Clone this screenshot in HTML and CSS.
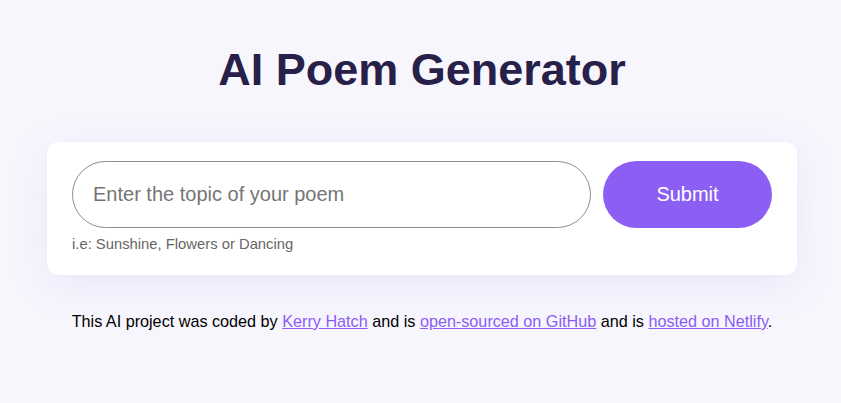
FILE: index.html
```html
<!DOCTYPE html>
<html lang="en">
<head>
<meta charset="utf-8">
<title>AI Poem Generator</title>
<link rel="stylesheet" href="styles.css">
</head>
<body>
<div class="container">
  <h1 class="title">AI Poem Generator</h1>
  <form class="card">
    <div class="row">
      <input class="topic" type="text" placeholder="Enter the topic of your poem">
      <button class="submit" type="button">Submit</button>
    </div>
    <div class="hint">i.e: Sunshine, Flowers or Dancing</div>
  </form>
  <footer class="footer">
    This AI project was coded by <a href="#">Kerry Hatch</a> and is <a href="#">open-sourced on GitHub</a> and is <a href="#">hosted on Netlify</a>.
  </footer>
</div>
</body>
</html>
```

FILE: styles.css
```css
html, body {
  margin: 0;
  padding: 0;
}
body {
  background: #f7f6fd;
  font-family: "Liberation Sans", Arial, sans-serif;
  min-height: 403px;
}
.container {
  width: 750px;
  margin: 0 auto;
  padding: 44px 0 0 3px;
}
.title {
  margin: 0;
  text-align: center;
  font-size: 45px;
  font-weight: 700;
  color: #27214a;
  line-height: 52px;
}
.card {
  margin-top: 46px;
  background: #fff;
  border-radius: 12px;
  padding: 19px 25px 21px;
  box-shadow: 0 10px 40px rgba(120, 100, 220, 0.1);
}
.row {
  display: flex;
  gap: 12px;
}
.topic {
  flex: 1;
  height: 67px;
  box-sizing: border-box;
  border: 1px solid #8e8c98;
  border-radius: 34px;
  padding: 0 20px;
  font-family: inherit;
  font-size: 20px;
  color: #333;
  outline: none;
}
.topic::placeholder {
  color: #757575;
}
.submit {
  width: 169px;
  height: 67px;
  border: none;
  border-radius: 34px;
  background: #8b5ff3;
  color: #fff;
  font-family: inherit;
  font-size: 20px;
}
.hint {
  margin-top: 7px;
  font-size: 14.8px;
  color: #666;
  line-height: 19px;
}
.footer {
  margin-top: 36px;
  text-align: center;
  font-size: 16.2px;
  color: #000;
  line-height: 21px;
}
.footer a {
  color: #8b5cf6;
}
```
